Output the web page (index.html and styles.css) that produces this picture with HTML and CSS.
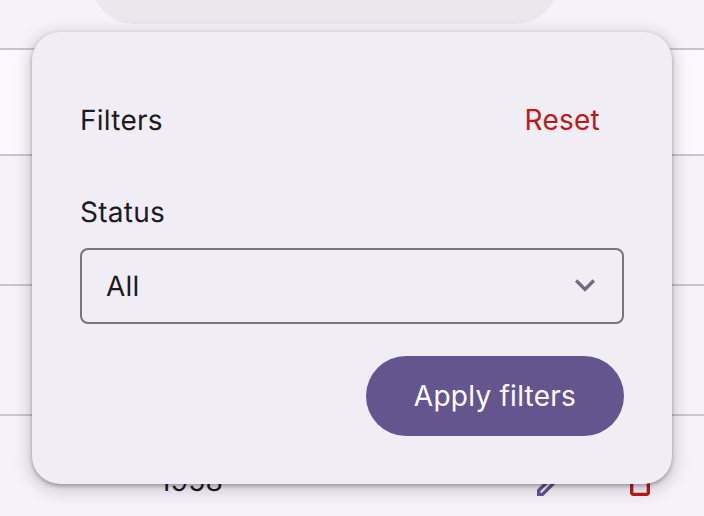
FILE: index.html
```html
<!DOCTYPE html>
<html lang="en">
<head>
    <meta charset="UTF-8">
    <title>Filters</title>
    <link rel="stylesheet" href="styles.css">
</head>
<body>
    <div class="page">
        <div class="table">
            <div class="row row-head"></div>
            <div class="row row-light"></div>
            <div class="row"></div>
            <div class="row"></div>
            <div class="row row-last">
                <span class="year">1958</span>
                <span class="actions">
                    <svg width="40" height="40" viewBox="0 0 24 24" fill="#65558f">
                        <path d="M14.06 9.02l.92.92L5.92 19H5v-.92l9.06-9.06M17.66 3c-.25 0-.51.1-.7.29l-1.83 1.83 3.75 3.75 1.83-1.83c.39-.39.39-1.02 0-1.41l-2.34-2.34c-.2-.2-.45-.29-.71-.29zm-3.6 3.19L3 17.25V21h3.75L17.81 9.94l-3.75-3.75z"/>
                    </svg>
                    <svg width="40" height="40" viewBox="0 0 24 24" fill="#ba1a1a">
                        <path d="M16 9v10H8V9h8m-1.5-6h-5l-1 1H5v2h14V4h-3.5l-1-1zM18 7H6v12c0 1.1.9 2 2 2h8c1.1 0 2-.9 2-2V7z"/>
                    </svg>
                </span>
            </div>
        </div>

        <div class="search-pill"></div>

        <div class="dialog">
            <div class="dialog-head">
                <span>Filters</span>
                <button class="btn-reset">Reset</button>
            </div>
            <label class="field-label">Status</label>
            <div class="select">
                <span>All</span>
                <svg class="chevron" width="40" height="40" viewBox="0 0 24 24" fill="#6f6d7c">
                    <path d="M16.59 8.59L12 13.17 7.41 8.59 6 10l6 6 6-6z"/>
                </svg>
            </div>
            <div class="dialog-foot">
                <button class="btn-apply">Apply filters</button>
            </div>
        </div>
    </div>
</body>
</html>
```

FILE: styles.css
```css
* {
    margin: 0;
    padding: 0;
    box-sizing: border-box;
}

html, body {
    width: 704px;
    height: 516px;
    overflow: hidden;
}

body {
    font-family: Inter, "Liberation Sans", sans-serif;
    font-size: 28px;
    letter-spacing: 0.25px;
    text-rendering: geometricPrecision;
    background-color: #f7f2fa;
    color: #1d1b20;
}

.page {
    position: relative;
    width: 704px;
    height: 516px;
    overflow: hidden;
}

.table {
    display: flex;
    flex-direction: column;
}

.row {
    flex-shrink: 0;
    height: 130px;
    border-bottom: 2px solid #cac4d0;
}

.row-head {
    height: 50px;
}

.row-light {
    height: 106px;
    background-color: #fdf8fe;
}

.row-last {
    border-bottom: none;
    display: flex;
    align-items: center;
    padding-left: 159px;
}

.actions {
    display: flex;
    margin-left: auto;
    margin-right: 44px;
    gap: 48px;
    align-items: center;
}

.search-pill {
    position: absolute;
    left: 92px;
    top: -60px;
    width: 466px;
    height: 84px;
    border-radius: 42px;
    background-color: #ebe7ed;
}

.dialog {
    position: absolute;
    left: 32px;
    top: 32px;
    width: 640px;
    height: 452px;
    padding: 48px;
    border-radius: 28px;
    background-color: #f1edf4;
    box-shadow: 0 2px 4px rgba(0, 0, 0, 0.3), 0 4px 16px 4px rgba(0, 0, 0, 0.15);
}

.dialog-head {
    display: flex;
    justify-content: space-between;
    align-items: center;
    height: 80px;
}

.btn-reset {
    font: inherit;
    letter-spacing: inherit;
    color: #ba1a1a;
    background: none;
    border: none;
    padding: 0 24px;
}

.field-label {
    display: block;
    margin-top: 32px;
    line-height: 40px;
}

.select {
    display: flex;
    justify-content: space-between;
    align-items: center;
    height: 76px;
    margin-top: 16px;
    padding: 0 17px 0 24px;
    border: 2px solid #79747e;
    border-radius: 8px;
}

.chevron {
    margin-bottom: 2px;
}

.dialog-foot {
    display: flex;
    justify-content: flex-end;
    margin-top: 32px;
}

.btn-apply {
    font: inherit;
    letter-spacing: inherit;
    color: #fff;
    width: 258px;
    height: 80px;
    border: none;
    border-radius: 40px;
    background-color: #65558f;
}
```
